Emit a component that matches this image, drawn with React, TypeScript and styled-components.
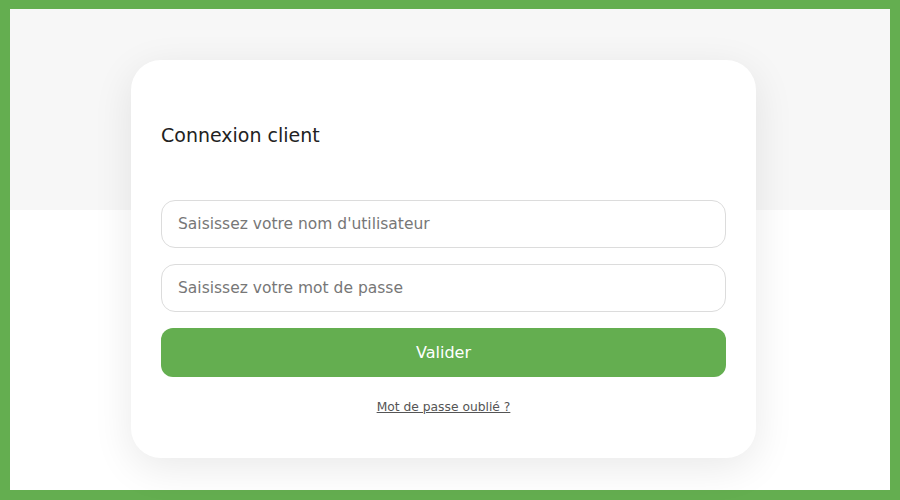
import { createGlobalStyle, styled } from "styled-components";

const green = "#64ae50";

const GlobalStyle = createGlobalStyle`
  html, body {
    margin: 0;
    padding: 0;
  }
  body {
    font-family: "DejaVu Sans", Verdana, sans-serif;
  }
  * {
    box-sizing: border-box;
  }
`;

const Frame = styled.div`
  width: 900px;
  height: 500px;
  border: 10px solid ${green};
  border-top-width: 9px;
  background: linear-gradient(to bottom, #f7f7f7 0, #f7f7f7 201px, #ffffff 201px);
  padding: 51px 0 0 121px;
`;

const Card = styled.div`
  width: 625px;
  height: 398px;
  background: #ffffff;
  border-radius: 30px;
  box-shadow: 0 10px 40px rgba(0, 0, 0, 0.09);
  padding: 64px 30px 0 30px;
  display: flex;
  flex-direction: column;
`;

const Title = styled.h2`
  margin: 0 0 54px 0;
  font-size: 19px;
  font-weight: normal;
  color: #222;
  line-height: 22px;
`;

const Field = styled.input`
  width: 100%;
  height: 48px;
  border: 1px solid #dcdcdc;
  border-radius: 14px;
  padding: 0 16px;
  font-family: "DejaVu Sans", Verdana, sans-serif;
  font-size: 15.5px;
  color: #333;
  margin-bottom: 16px;
  outline: none;
  &::placeholder {
    color: #777;
  }
`;

const Submit = styled.button`
  width: 100%;
  height: 49px;
  border: none;
  border-radius: 12px;
  background: ${green};
  color: #fff;
  font-family: "DejaVu Sans", Verdana, sans-serif;
  font-size: 16px;
  cursor: pointer;
`;

const Forgot = styled.a`
  align-self: center;
  margin-top: 23px;
  font-size: 12.3px;
  color: #555;
  text-decoration: underline;
`;

export default function App() {
  return (
    <>
      <GlobalStyle />
      <Frame>
        <Card>
          <Title>Connexion client</Title>
          <Field type="text" placeholder="Saisissez votre nom d'utilisateur" />
          <Field type="password" placeholder="Saisissez votre mot de passe" />
          <Submit>Valider</Submit>
          <Forgot href="#">Mot de passe oublié ?</Forgot>
        </Card>
      </Frame>
    </>
  );
}
